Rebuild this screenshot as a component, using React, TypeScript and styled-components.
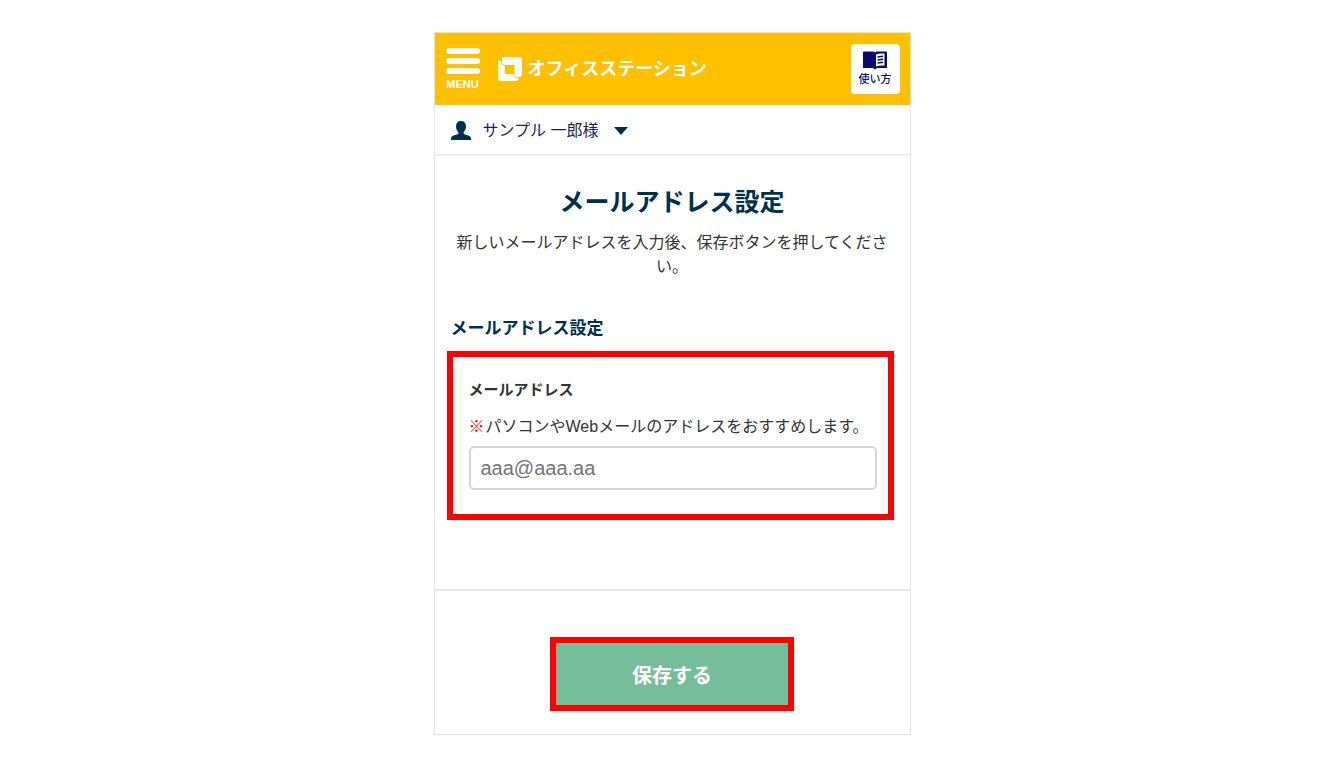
import React, { useState } from "react";
import styled, { createGlobalStyle } from "styled-components";

const navy = "#00304b";
const sans = '"Liberation Sans", "Noto Sans CJK JP", sans-serif';

const GlobalStyle = createGlobalStyle`
  * { box-sizing: border-box; }
  body {
    margin: 0;
    background: #fff;
    color: #333;
    font-family: ${sans};
    font-size: 16px;
    line-height: 24px;
  }
  h1, h2, p { margin: 0; }
  button, input { font-family: inherit; }
`;

const Page = styled.div`
  padding: 32px;
`;

const Card = styled.main`
  max-width: 477px;
  margin: 0 auto;
  border: 1px solid #e3e3e3;
  background: #fff;
`;

const Header = styled.header`
  display: flex;
  align-items: center;
  height: 72px;
  padding: 0 10px 0 11px;
  background: #ffc000;
`;

const MenuButton = styled.button`
  display: flex;
  flex-direction: column;
  align-items: center;
  gap: 4px;
  width: 34px;
  padding: 0;
  border: 0;
  background: none;
  color: #fff;
  font-size: 11px;
  font-weight: 700;
  line-height: 12px;
  cursor: pointer;
`;

const MenuBar = styled.span`
  width: 34px;
  height: 6px;
  border-radius: 3px;
  background: #fff;
`;

const Brand = styled.a`
  display: flex;
  align-items: center;
  gap: 6px;
  margin-left: 18px;
  color: #fff;
  font-size: 18px;
  font-weight: 700;
  text-decoration: none;
`;

const HelpButton = styled.button`
  display: flex;
  flex-direction: column;
  align-items: center;
  width: 49px;
  height: 50px;
  margin-left: auto;
  padding: 7px 0 0;
  border: 0;
  border-radius: 4px;
  background: #fff;
  color: #0a0a6e;
  font-size: 11px;
  font-weight: 500;
  line-height: 18px;
  cursor: pointer;
`;

const UserBar = styled.div`
  display: flex;
  height: 50px;
  padding: 2px 16px 0;
  border-bottom: 1px solid #e9e9e9;
  box-shadow: 0 1px 2px #eee;
`;

const UserButton = styled.button`
  display: flex;
  align-items: center;
  padding: 0;
  border: 0;
  background: none;
  color: #1d2357;
  font-size: 16px;
  line-height: 24px;
  cursor: pointer;
`;

const UserName = styled.span`
  margin: 0 16px 0 12px;
`;

const Intro = styled.section`
  padding: 31px 16px 0;
  text-align: center;
`;

const Title = styled.h1`
  margin-bottom: 13px;
  color: ${navy};
  font-size: 25px;
  line-height: 32px;
`;

const SectionTitle = styled.h2`
  margin: 38px 16px 10px;
  color: ${navy};
  font-size: 17px;
  line-height: 24px;
`;

const FieldPanel = styled.div`
  display: flex;
  flex-direction: column;
  margin: 0 16px 69px 12px;
  padding: 21px 11px 24px 16px;
  border: 6px solid #f00;
`;

const FieldLabel = styled.label`
  margin-bottom: 13px;
  font-size: 15px;
  font-weight: 700;
`;

const FieldNote = styled.p`
  display: flex;
  gap: 1px;
  margin-bottom: 7px;
`;

const NoteMark = styled.span`
  color: #f00;
  font-weight: 700;
`;

const TextInput = styled.input`
  width: 100%;
  height: 44px;
  padding: 0 10px;
  border: 2px solid #d5d5d5;
  border-radius: 5px;
  background: #fff;
  color: #333;
  font-size: 20px;
  &::placeholder { color: #757575; opacity: 1; }
`;

const Actions = styled.footer`
  display: flex;
  justify-content: center;
  padding: 46px 16px 23px;
  border-top: 2px solid #e9e9e9;
`;

const SaveButton = styled.button`
  width: 244px;
  height: 74px;
  border: 6px solid #f00;
  background: #76be9b;
  color: #fff;
  font-size: 20px;
  font-weight: 700;
  cursor: pointer;
`;

const LogoMark = () => (
  <svg width="24" height="24" viewBox="0 0 24 24" fill="none" aria-hidden="true">
    <path fill="#fff" fillRule="evenodd" d="M4 0H21Q24 0 24 3V17Q24 20 21 20H17.500L16.500 17V8H7.500L4 6.500Z" />
    <path fill="#fff" d="M0 3.500L3.300 4.500V7.300L6.800 8.700V17H15.800L17 20.700H20.500L20 22.500Q19.500 24 18 24H3Q0 24 0 21Z" />
  </svg>
);

const BookIcon = () => (
  <svg width="24" height="19" viewBox="0 0 24 19" aria-hidden="true">
    <path fill="#0a0a6e" d="M0 1.500Q0 .5 1 .5H10.500L12 1.500L13.500 .5H23Q24 .5 24 1.500V17H14L12 18.500L10 17H0Z" />
    <path fill="#fff" d="M13 3.500Q16 2 21.500 2.500V14.500Q16 14 13 15.500Z" />
    <path stroke="#0a0a6e" strokeWidth="1.500" d="M14.500 6L20 5.200M14.500 9L20 8.200M14.500 12L20 11.200" />
  </svg>
);

const PersonIcon = () => (
  <svg width="20" height="20" viewBox="0 0 20 20" fill={navy} aria-hidden="true">
    <path d="M10 0C13.300 0 15 2 15 5.500C15 8 14 10 12.700 11V13L18 14.800Q20 15.500 20 17.500V19H0V17.500Q0 15.500 2 14.800L7.300 13V11C6 10 5 8 5 5.500C5 2 6.700 0 10 0Z" />
  </svg>
);

const CaretIcon = () => (
  <svg width="14" height="8" viewBox="0 0 14 8" fill={navy} aria-hidden="true">
    <path d="M0 0H14L7 8Z" />
  </svg>
);

export default function App() {
  const [email, setEmail] = useState("");

  return (
    <>
      <GlobalStyle />
      <Page>
        <Card>
          <Header>
            <MenuButton type="button">
              <MenuBar />
              <MenuBar />
              <MenuBar />
              MENU
            </MenuButton>
            <Brand href="#">
              <LogoMark />
              オフィスステーション
            </Brand>
            <HelpButton type="button">
              <BookIcon />
              使い方
            </HelpButton>
          </Header>
          <UserBar>
            <UserButton type="button">
              <PersonIcon />
              <UserName>サンプル 一郎様</UserName>
              <CaretIcon />
            </UserButton>
          </UserBar>
          <Intro>
            <Title>メールアドレス設定</Title>
            <p>新しいメールアドレスを入力後、保存ボタンを押してください。</p>
          </Intro>
          <SectionTitle>メールアドレス設定</SectionTitle>
          <FieldPanel>
            <FieldLabel htmlFor="email">メールアドレス</FieldLabel>
            <FieldNote>
              <NoteMark>※</NoteMark>
              パソコンやWebメールのアドレスをおすすめします。
            </FieldNote>
            <TextInput
              id="email"
              type="email"
              placeholder="aaa@aaa.aa"
              value={email}
              onChange={(event) => setEmail(event.target.value)}
            />
          </FieldPanel>
          <Actions>
            <SaveButton type="submit">保存する</SaveButton>
          </Actions>
        </Card>
      </Page>
    </>
  );
}
